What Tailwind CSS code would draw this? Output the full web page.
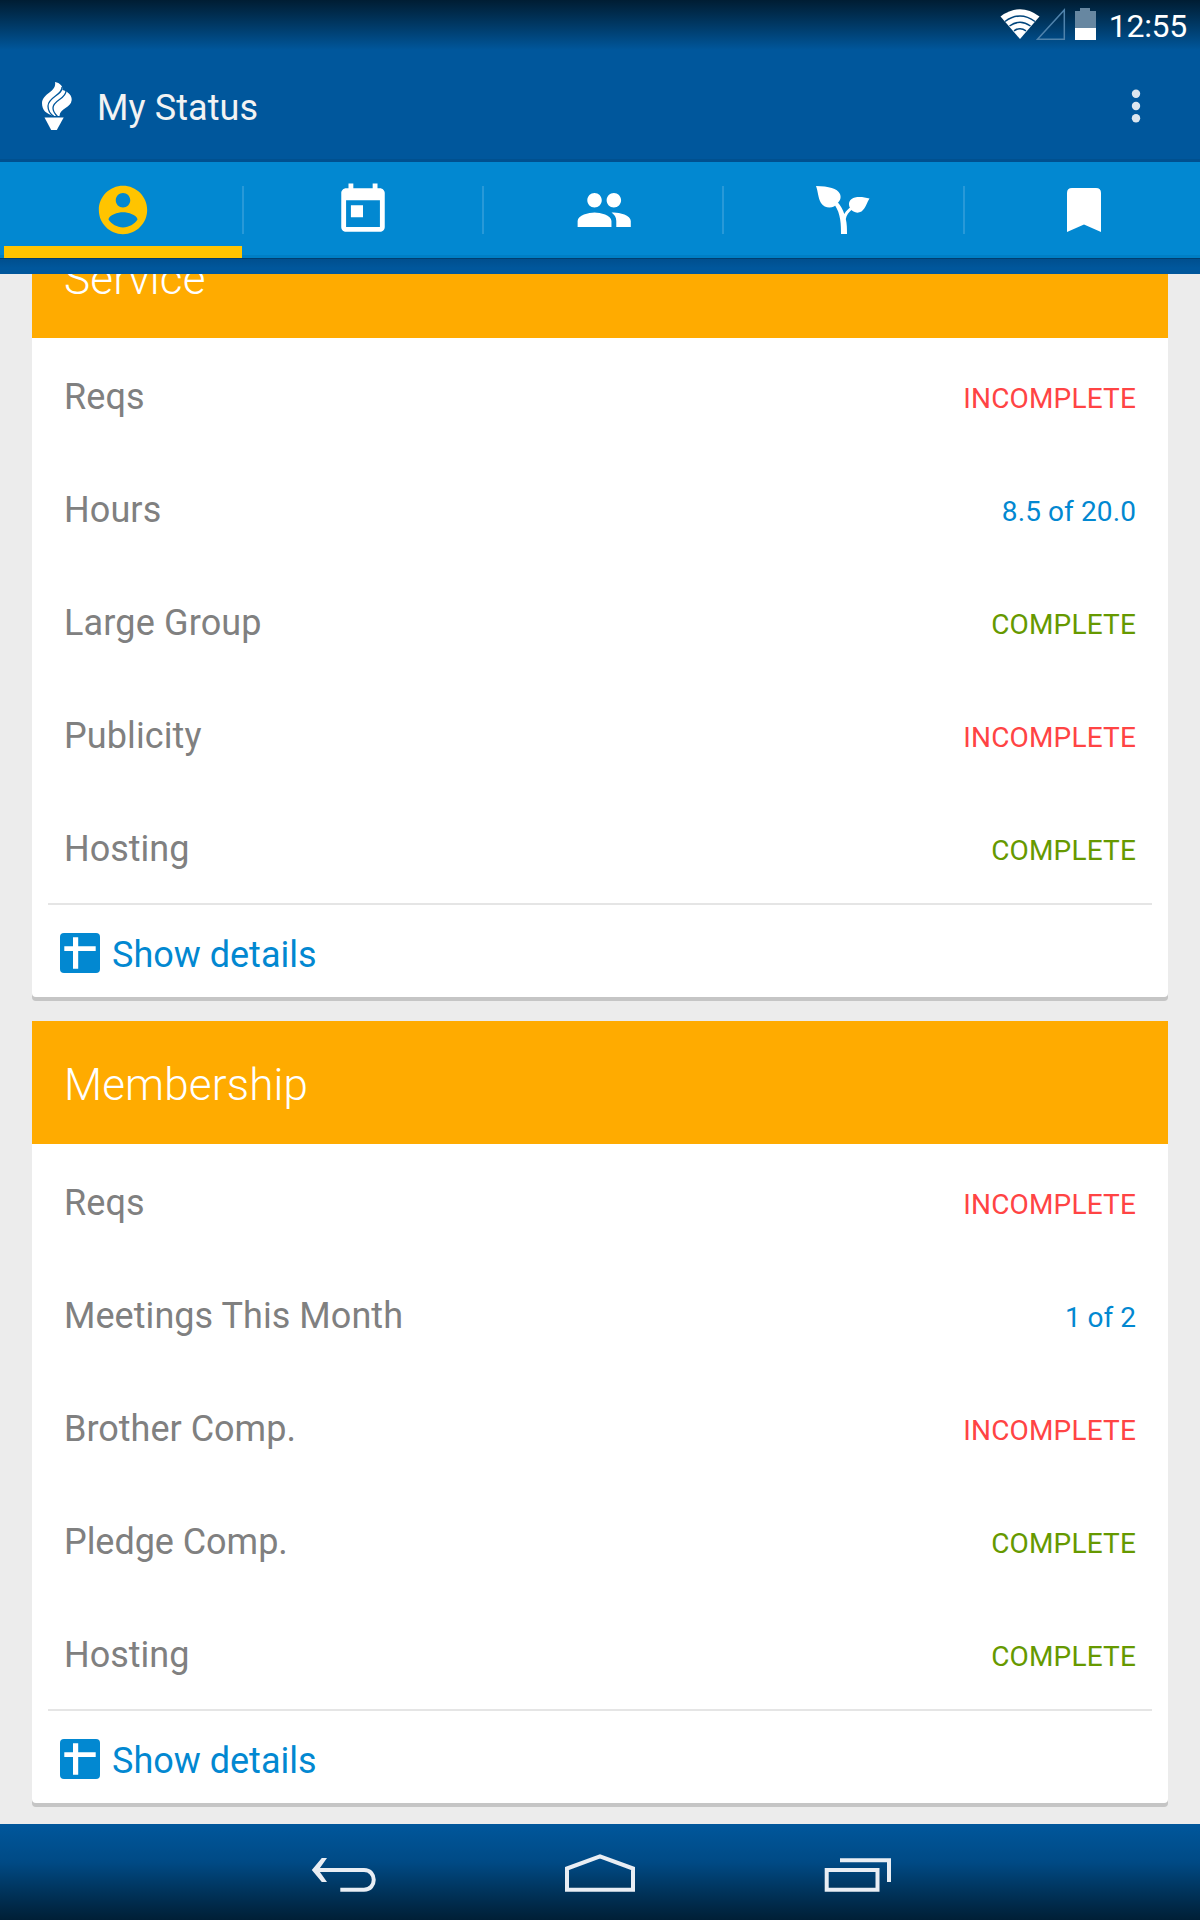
<!DOCTYPE html>
<html lang="en">
<head>
<meta charset="utf-8">
<title>My Status</title>
<script src="https://cdn.jsdelivr.net/npm/@tailwindcss/browser@4"></script>
</head>
<body class="bg-[#ececec]">
<div class="flex h-[1920px] w-[1200px] flex-col overflow-hidden bg-[#ececec] font-[Roboto,sans-serif]">

  <!-- Status bar and action bar -->
  <header class="flex h-[162px] shrink-0 flex-col border-b-3 border-[#00508f] bg-[#00579c]">
    <div class="flex h-[50px] items-start justify-end bg-linear-to-b from-[#001d33] to-[#00579c] pr-[13px]">
      <svg class="mt-2 h-8 w-[104px] shrink-0" viewBox="0 0 104 32">
        <path d="M0.500 8.500Q20 -6 39.500 8.500L20 31Z" fill="#fff"/>
        <g fill="none" stroke="#00457c" stroke-width="1.500"><path d="M5 13.500Q20 2.500 35 13.500"/><path d="M9.500 18Q20 10.500 30.500 18"/><path d="M14 22.800Q20 18.500 26 22.800"/></g>
        <path d="M37.500 31.200L64.300 2V31.200Z" fill="none" stroke="#4f83ac" stroke-width="1.500"/>
        <path d="M75 3h5V0h10v3h6v17H75Z" fill="#6787a1"/>
        <path d="M75 20h21v12H75Z" fill="#fff"/>
      </svg>
      <span class="mt-[7px] w-[83px] text-right text-[32px] leading-[38px] tracking-[-0.3px] text-white">12:55</span>
    </div>
    <div class="flex flex-1 items-start">
      <svg class="ml-[41px] mt-8 h-[49px] w-8" viewBox="0 0 32 49">
        <path d="M14 0C19 1 22 4 21.500 8C28 10 31 14 30.700 18C30 26 19 26 18.500 34H13C5 32 1 28 1 21C1.500 11 16 10 14 0Z" fill="#fff"/>
        <g fill="none" stroke="#00579c" stroke-width="1.300"><path d="M21 5C22 13 7 15 7 24C7 28 9 32 13 34.500"/><path d="M25 9C25 17 12 18 12 26C12 30 14 32 16.500 34.500"/></g>
        <path d="M3.500 35.500H22.700L15.800 48H10.200Z" fill="#fff"/>
      </svg>
      <h1 class="ml-[24px] mt-[36px] text-[36px] leading-[44px] tracking-[0.1px] text-[#f3f3f3]">My Status</h1>
      <svg class="ml-auto mt-[39px] mr-[59px] h-[34px] w-[10px]" viewBox="0 0 10 34" fill="#dce6ef"><circle cx="5" cy="4.700" r="4.200"/><circle cx="5" cy="17" r="4.200"/><circle cx="5" cy="29.300" r="4.200"/></svg>
    </div>
  </header>

  <!-- Tabs -->
  <nav class="z-10 flex h-24 shrink-0 border-b-3 border-[#007fc5] bg-[#0288d1] pl-1 text-white">
    <div class="z-10 -mb-[3px] flex w-[238px] shrink-0 justify-center border-b-12 border-[#ffc400]">
      <svg class="mt-[19px] h-[58px] w-[58px] text-[#ffc400]" viewBox="0 0 24 24" fill="currentColor"><path d="M12 2C6.480 2 2 6.480 2 12s4.480 10 10 10 10-4.480 10-10S17.520 2 12 2zm0 3c1.660 0 3 1.340 3 3s-1.340 3-3 3-3-1.340-3-3 1.340-3 3-3zm0 14.200c-2.500 0-4.710-1.280-6-3.220.03-1.990 4-3.080 6-3.080 1.990 0 5.970 1.090 6 3.080-1.290 1.940-3.500 3.220-6 3.220z"/></svg>
    </div>
    <i class="mt-6 h-12 w-[2px] shrink-0 bg-[#2899d8]"></i>
    <div class="flex w-[238px] shrink-0 justify-center">
      <svg class="mt-[19px] h-[58px] w-[58px]" viewBox="0 0 24 24" fill="currentColor"><path d="M19 3h-1V1h-2v2H8V1H6v2H5c-1.110 0-1.990.9-1.990 2L3 19c0 1.100.89 2 2 2h14c1.100 0 2-.9 2-2V5c0-1.100-.9-2-2-2zm0 16H5V8h14v11zM7 10h5v5H7z"/></svg>
    </div>
    <i class="mt-6 h-12 w-[2px] shrink-0 bg-[#2899d8]"></i>
    <div class="flex w-[238px] shrink-0 justify-center pr-[1px]">
      <svg class="mt-[19px] h-[58px] w-[58px]" viewBox="0 0 24 24" fill="currentColor"><path d="M16.500 11c1.660 0 2.990-1.340 2.990-3S18.160 5 16.500 5c-1.660 0-3 1.340-3 3s1.340 3 3 3zm-8 0c1.660 0 2.990-1.340 2.990-3S10.160 5 8.500 5c-1.660 0-3 1.340-3 3s1.340 3 3 3zm0 2c-2.330 0-7 1.170-7 3.500V19h14v-2.500c0-2.330-4.670-3.500-7-3.500zm8 0c-.29 0-.62.020-.97.050 1.160.84 1.970 1.970 1.970 3.450V19h6v-2.500c0-2.330-4.670-3.500-7-3.500z"/></svg>
    </div>
    <i class="mt-6 h-12 w-[2px] shrink-0 bg-[#2899d8]"></i>
    <div class="flex w-[239px] shrink-0 justify-center pr-[1px]">
      <svg class="mt-6 h-12 w-[54px]" viewBox="0 0 54 48" fill="currentColor">
        <path d="M0 0C13 .5 21 2 24 8C25.500 12 24 15 21.500 17C18 23 9 23 5 17C2 12 2 5 0 0Z"/>
        <path d="M53.500 12.500C51 16 50 22 45.500 25.500C41 28 37 26 34.500 23C31 17 34 12.500 39 11.500C44 10.500 49 11.500 53.500 12.500Z"/>
        <path d="M18.500 18.500L21.500 16C25 20 27 24 28.300 28C30 25 32.500 22.500 35 21L36.500 23C32.500 26.500 30.500 29 29.800 33C31 38 31 43 31 48H25C25 39 25 28 18.500 18.500Z"/>
      </svg>
    </div>
    <i class="mt-6 h-12 w-[2px] shrink-0 bg-[#2899d8]"></i>
    <div class="flex w-[238px] shrink-0 justify-center">
      <svg class="mt-[26px] h-11 w-[34px]" viewBox="0 0 34 44" fill="currentColor"><path d="M5 0H29Q34 0 34 5V44L17 36.500L0 44V5Q0 0 5 0Z"/></svg>
    </div>
  </nav>
  <div class="z-10 h-4 shrink-0 border-t border-[#003f70] bg-linear-to-b from-[#004f8e] to-[#00579c] to-60%"></div>

  <!-- Scrolled card list -->
  <main class="flex h-[1550px] shrink-0 flex-col gap-5 overflow-hidden px-8">
    <section class="-mt-[59px] mb-1 shrink-0 rounded-b bg-white shadow-[0_4px_0_#c5c5c5]">
      <h2 class="h-[123px] bg-[#ffab00] px-8 pt-[38px] text-[44px] leading-[52px] font-light tracking-[0.15px] text-white">Service</h2>
      <dl class="text-[28px]">
        <div class="flex h-[113px] items-center justify-between px-8 pt-1"><dt class="text-[36px] tracking-[0.1px] text-[#808080]">Reqs</dt><dd class="mt-1 tracking-[0.17px] text-[#ff4444]">INCOMPLETE</dd></div>
        <div class="flex h-[113px] items-center justify-between px-8 pt-1"><dt class="text-[36px] tracking-[0.1px] text-[#808080]">Hours</dt><dd class="mt-1 tracking-[0.1px] text-[#0288d1]">8.5 of 20.0</dd></div>
        <div class="flex h-[113px] items-center justify-between px-8 pt-1"><dt class="text-[36px] tracking-[0.15px] text-[#808080]">Large Group</dt><dd class="mt-1 tracking-[0.17px] text-[#669900]">COMPLETE</dd></div>
        <div class="flex h-[113px] items-center justify-between px-8 pt-1"><dt class="text-[36px] tracking-[0.1px] text-[#808080]">Publicity</dt><dd class="mt-1 tracking-[0.17px] text-[#ff4444]">INCOMPLETE</dd></div>
        <div class="flex h-[113px] items-center justify-between px-8 pt-1"><dt class="text-[36px] text-[#808080]">Hosting</dt><dd class="mt-1 tracking-[0.17px] text-[#669900]">COMPLETE</dd></div>
      </dl>
      <div class="mx-4 flex h-[94px] items-start border-t-2 border-[#e5e5e5] pl-3 text-[#0288d1]">
        <svg class="mt-7 h-10 w-10" viewBox="0 0 40 40"><rect width="40" height="40" rx="4" fill="#0288d1"/><path d="M13 4.300h5.200v9h17.500v4.700H18.200v17.700H13V18H4.300v-4.700H13Z" fill="#fff"/></svg>
        <span class="ml-3 mt-7 text-[36px] leading-[44px]">Show details</span>
      </div>
    </section>
    <section class="shrink-0 rounded-b bg-white shadow-[0_4px_0_#c5c5c5]">
      <h2 class="h-[123px] bg-[#ffab00] px-8 pt-[38px] text-[44px] leading-[52px] font-light tracking-[0.15px] text-white">Membership</h2>
      <dl class="text-[28px]">
        <div class="flex h-[113px] items-center justify-between px-8 pt-1"><dt class="text-[36px] tracking-[0.1px] text-[#808080]">Reqs</dt><dd class="mt-1 tracking-[0.17px] text-[#ff4444]">INCOMPLETE</dd></div>
        <div class="flex h-[113px] items-center justify-between px-8 pt-1"><dt class="text-[36px] tracking-[0.05px] text-[#808080]">Meetings This Month</dt><dd class="mt-1 text-[#0288d1]">1 of 2</dd></div>
        <div class="flex h-[113px] items-center justify-between px-8 pt-1"><dt class="text-[36px] text-[#808080]">Brother Comp.</dt><dd class="mt-1 tracking-[0.17px] text-[#ff4444]">INCOMPLETE</dd></div>
        <div class="flex h-[113px] items-center justify-between px-8 pt-1"><dt class="text-[36px] tracking-[-0.05px] text-[#808080]">Pledge Comp.</dt><dd class="mt-1 tracking-[0.17px] text-[#669900]">COMPLETE</dd></div>
        <div class="flex h-[113px] items-center justify-between px-8 pt-1"><dt class="text-[36px] text-[#808080]">Hosting</dt><dd class="mt-1 tracking-[0.17px] text-[#669900]">COMPLETE</dd></div>
      </dl>
      <div class="mx-4 flex h-[94px] items-start border-t-2 border-[#e5e5e5] pl-3 text-[#0288d1]">
        <svg class="mt-7 h-10 w-10" viewBox="0 0 40 40"><rect width="40" height="40" rx="4" fill="#0288d1"/><path d="M13 4.300h5.200v9h17.500v4.700H18.200v17.700H13V18H4.300v-4.700H13Z" fill="#fff"/></svg>
        <span class="ml-3 mt-7 text-[36px] leading-[44px]">Show details</span>
      </div>
    </section>
  </main>

  <!-- System navigation -->
  <footer class="z-10 flex h-24 shrink-0 items-start bg-linear-to-b from-[#00579c] via-[#004a85] via-40% to-[#001f36] pt-7 pl-[311px]">
    <svg class="h-11 w-[66px]" viewBox="0 0 66 44"><path d="M5 18H53C66 18 66 37.700 53 37.700H29.300" fill="none" stroke="#e9eef4" stroke-width="4"/><path d="M10.800 6H16L7.500 18L16 30H10.800L.8 18Z" fill="#e9eef4"/></svg>
    <svg class="ml-[187px] h-11 w-[72px]" viewBox="0 0 72 44" fill="none" stroke="#e9eef4" stroke-width="4"><path d="M3 37.800V16.500L36 4.300L69 16.500V37.800Z"/></svg>
    <svg class="ml-[188px] h-11 w-[68px]" viewBox="0 0 68 44" fill="none" stroke="#e9eef4" stroke-width="4"><path d="M2.700 18H53.500V37.800H2.700Z"/><path d="M16 8.200H65V30"/></svg>
  </footer>
</div>
</body>
</html>
